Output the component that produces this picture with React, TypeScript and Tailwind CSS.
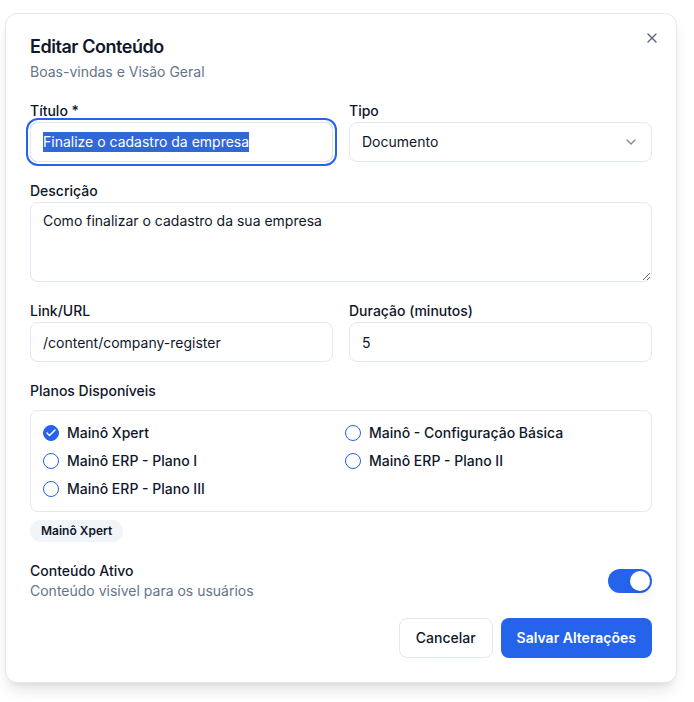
import { Check, ChevronDown, X } from "lucide-react";

const plans = [
  { name: "Mainô Xpert", checked: true },
  { name: "Mainô - Configuração Básica", checked: false },
  { name: "Mainô ERP - Plano I", checked: false },
  { name: "Mainô ERP - Plano II", checked: false },
  { name: "Mainô ERP - Plano III", checked: false },
];

function Label({ children }: { children: React.ReactNode }) {
  return <div className="h-5 text-sm font-medium leading-5 text-[#0f172a]">{children}</div>;
}

function PlanOption({ name, checked }: { name: string; checked: boolean }) {
  return (
    <div className="flex h-5 items-center gap-2">
      <span
        className={`flex h-4 w-4 shrink-0 items-center justify-center rounded-full border border-[#2563eb] ${
          checked ? "bg-[#2563eb]" : "bg-white"
        }`}
      >
        {checked && <Check className="h-3 w-3 text-white" strokeWidth={3} />}
      </span>
      <span className="text-sm font-medium text-[#0f172a]">{name}</span>
    </div>
  );
}

export default function App() {
  return (
    <div className="min-h-[702px] bg-white pl-[5px] pt-[13px] font-['Inter',sans-serif] text-[#0f172a]">
      <div className="relative w-[672px] rounded-xl border border-[#e2e8f0] bg-white p-6 shadow-lg">
        <button className="absolute right-4 top-4 text-[#334155] opacity-80">
          <X className="h-4 w-4" />
        </button>

        <div className="flex flex-col gap-1.5">
          <h2 className="text-lg font-semibold leading-none tracking-tight">Editar Conteúdo</h2>
          <p className="text-sm leading-5 text-[#64748b]">Boas-vindas e Visão Geral</p>
        </div>

        <div className="mt-[19px] flex flex-col gap-[19px]">
          <div className="grid grid-cols-2 gap-4">
            <div>
              <Label>Título *</Label>
              <div className="mt-px flex h-10 items-center rounded-lg border border-[#e2e8f0] px-3 text-sm ring-2 ring-[#2563eb] ring-offset-2">
                <span className="bg-[#3168d6] text-white">Finalize o cadastro da empresa</span>
              </div>
            </div>
            <div>
              <Label>Tipo</Label>
              <div className="mt-px flex h-10 items-center justify-between rounded-lg border border-[#e2e8f0] px-3 text-sm">
                <span>Documento</span>
                <ChevronDown className="h-4 w-4 opacity-50" />
              </div>
            </div>
          </div>

          <div>
            <Label>Descrição</Label>
            <textarea
              readOnly
              defaultValue="Como finalizar o cadastro da sua empresa"
              className="mt-px block h-20 w-full rounded-lg border border-[#e2e8f0] px-3 py-2 text-sm leading-5 outline-none"
            />
          </div>

          <div className="grid grid-cols-2 gap-4">
            <div>
              <Label>Link/URL</Label>
              <input
                readOnly
                defaultValue="/content/company-register"
                className="mt-px block h-10 w-full rounded-lg border border-[#e2e8f0] px-3 text-sm outline-none"
              />
            </div>
            <div>
              <Label>Duração (minutos)</Label>
              <input
                readOnly
                defaultValue="5"
                className="mt-px block h-10 w-full rounded-lg border border-[#e2e8f0] px-3 text-sm outline-none"
              />
            </div>
          </div>

          <div>
            <Label>Planos Disponíveis</Label>
            <div className="mt-[9px] grid grid-cols-2 gap-2 rounded-lg border border-[#e2e8f0] p-3">
              {plans.map((p) => (
                <PlanOption key={p.name} name={p.name} checked={p.checked} />
              ))}
            </div>
            <div className="mt-2 flex">
              <span className="rounded-full border border-transparent bg-[#f1f5f9] px-2.5 py-0.5 text-xs font-semibold leading-4">
                Mainô Xpert
              </span>
            </div>
          </div>
        </div>

        <div className="mt-[19px] flex items-center justify-between">
          <div>
            <div className="text-sm font-medium leading-5">Conteúdo Ativo</div>
            <div className="text-sm leading-5 text-[#64748b]">Conteúdo visível para os usuários</div>
          </div>
          <div className="flex h-6 w-11 items-center rounded-full bg-[#2563eb] p-0.5">
            <span className="ml-auto h-5 w-5 rounded-full bg-white shadow-lg" />
          </div>
        </div>

        <div className="mt-[17px] flex justify-end gap-2">
          <button className="h-10 rounded-lg border border-[#e2e8f0] bg-white px-4 text-sm font-medium">
            Cancelar
          </button>
          <button className="h-10 rounded-lg bg-[#2563eb] px-4 text-sm font-semibold text-white">
            Salvar Alterações
          </button>
        </div>
      </div>
    </div>
  );
}
